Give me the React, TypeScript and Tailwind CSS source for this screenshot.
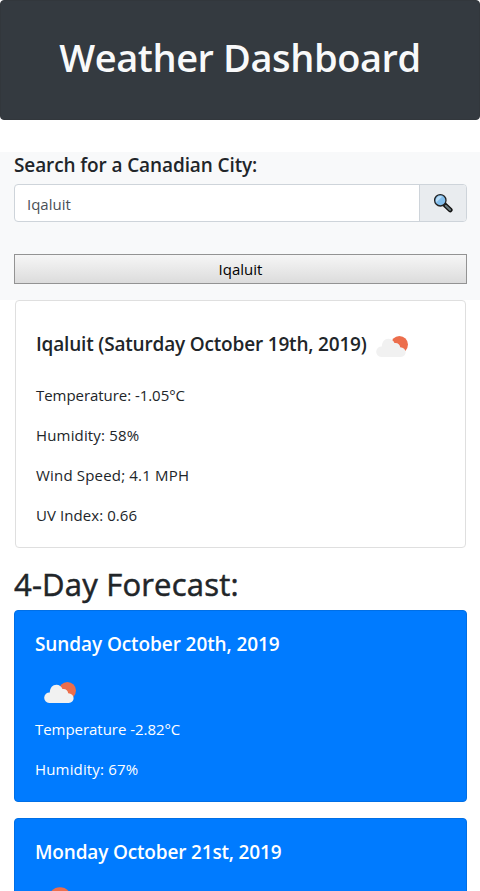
import React from "react";

function CloudSun() {
  return (
    <svg className="block h-[21px] w-8 shrink-0" viewBox="0 0 32 21">
      <circle cx="23.4" cy="8.6" r="8.6" fill="#ec6e4c" />
      <path
        className="fill-[#f1f1f1]"
        d="M5.2 21A5.300 5.300 0 0 1 5.8 10.4C6 5.800 8.6 2.700 12.4 2.700c2.9 0 5.100 1.6 6.1 4.300 3-.6 5.4 1.4 5.7 4.2 3.2.1 5.4 2.2 5.4 4.9 0 2.900-2 4.900-4.800 4.900Z"
      />
    </svg>
  );
}

function Sun() {
  return (
    <svg className="-mt-[3px] ml-[4px] block h-6 w-6 shrink-0" viewBox="0 0 24 24">
      <circle cx="12" cy="12" r="11.700" fill="#ec6e4c" />
    </svg>
  );
}

function Magnifier() {
  return (
    <svg className="h-5 w-5" viewBox="0 0 20 20">
      <path d="M12 12l5.300 5" stroke="#111" strokeWidth="4.600" strokeLinecap="round" />
      <path d="M12.800 12.800l4.200 4" stroke="#69797e" strokeWidth="2.200" strokeLinecap="round" />
      <circle cx="7.300" cy="7.300" r="5.700" fill="#83beec" stroke="#222" strokeWidth="1.300" />
      <path d="M3.500 9.300a4.300 4.300 0 0 1 5.800-5.800Z" fill="#b9dcf6" />
    </svg>
  );
}

type Line = { text: string; tracking: string };
type Day = { date: string; tracking: string; icon: React.ReactNode; lines: Line[] };

const days: Day[] = [
  {
    date: "Sunday October 20th, 2019",
    tracking: "tracking-[-0.09px]",
    icon: <CloudSun />,
    lines: [
      { text: "Temperature -2.82°C", tracking: "tracking-[-0.04px]" },
      { text: "Humidity: 67%", tracking: "tracking-[0.16px]" },
    ],
  },
  { date: "Monday October 21st, 2019", tracking: "tracking-[-0.17px]", icon: <Sun />, lines: [] },
];

const readings: Line[] = [
  { text: "Temperature: -1.05°C", tracking: "tracking-[-0.05px]" },
  { text: "Humidity: 58%", tracking: "tracking-[0.16px]" },
  { text: "Wind Speed; 4.1 MPH", tracking: "tracking-[0.18px]" },
  { text: "UV Index: 0.66", tracking: "tracking-[0.07px]" },
];

function ForecastCard({ day }: { day: Day }) {
  return (
    <article className="h-48 shrink-0 rounded border border-[#006fe6] bg-[#007bff] px-5 pt-5 text-white">
      <h5 className={`mt-[1px] text-[19px] leading-6 font-semibold whitespace-nowrap ${day.tracking}`}>{day.date}</h5>
      <div className="mt-[26px] ml-[9px]">{day.icon}</div>
      <div className="mt-[14px] flex flex-col gap-4">
        {day.lines.map((line) => (
          <p key={line.text} className={`text-[15px] leading-6 ${line.tracking}`}>
            {line.text}
          </p>
        ))}
      </div>
    </article>
  );
}

export default function App() {
  return (
    <div className="h-[891px] w-full overflow-hidden bg-white font-['Open_Sans',sans-serif] text-[#212529]">
      <header className="flex h-[120px] items-center justify-center rounded border border-[#32373c] bg-[#343a40] pb-[6px]">
        <h1 className="text-[38px] leading-[48px] font-semibold tracking-[-0.42px] whitespace-nowrap text-[#f8f9fa]">
          Weather Dashboard
        </h1>
      </header>

      <section className="mt-8 h-[148px] bg-[#f8f9fa] pr-[13px] pl-[14px]">
        <h5 className="pt-[1px] text-[19px] leading-6 font-semibold tracking-[-0.11px] whitespace-nowrap">
          Search for a Canadian City:
        </h5>
        <div className="mt-[7px] flex h-[38px] overflow-hidden rounded border border-[#ced4da] bg-white">
          <div className="flex flex-1 items-center pt-[2px] pl-3 text-[15px] text-[#495057]">Iqaluit</div>
          <button className="flex w-[47px] items-center justify-center border-l border-[#ced4da] bg-[#e9ecef]">
            <Magnifier />
          </button>
        </div>
        <button className="mt-8 flex h-[30px] w-full items-center justify-center border border-[#939393] bg-linear-to-b from-[#f6f6f6] to-[#dcdcdc] text-[15px] text-black">
          Iqaluit
        </button>
      </section>

      <section className="mr-[14px] ml-[15px] h-[248px] rounded border border-[#dfdfdf] bg-white px-5">
        <div className="flex pt-[31px]">
          <h5 className="w-[331px] text-[19px] leading-6 font-semibold tracking-[-0.18px] whitespace-nowrap">
            Iqaluit (Saturday October 19th, 2019)
          </h5>
          <div className="mt-1 ml-[9px]">
            <CloudSun />
          </div>
        </div>
        <div className="mt-[26px] flex flex-col gap-4">
          {readings.map((line) => (
            <p key={line.text} className={`text-[15px] leading-6 ${line.tracking}`}>
              {line.text}
            </p>
          ))}
        </div>
      </section>

      <section className="mt-[17px] pr-[13px] pl-[14px]">
        <h2 className="text-[31px] leading-[38px] tracking-[0.2px] [-webkit-text-stroke:0.5px_#212529]">
          4-Day Forecast:
        </h2>
        <div className="mt-[7px] flex flex-col gap-4">
          {days.map((day) => (
            <ForecastCard key={day.date} day={day} />
          ))}
        </div>
      </section>
    </div>
  );
}
